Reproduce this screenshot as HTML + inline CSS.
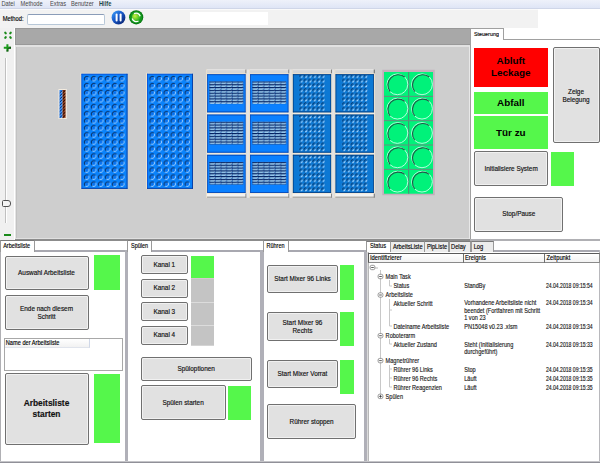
<!DOCTYPE html><html><head><meta charset="utf-8"><style>*{margin:0;padding:0;box-sizing:content-box}
html,body{width:600px;height:465px;overflow:hidden;background:#fff;position:relative;font-family:"Liberation Sans",sans-serif}
.g{position:absolute}
.t{position:absolute;white-space:nowrap;line-height:1.2;-webkit-text-stroke:0.12px currentColor;font-family:"Liberation Sans",sans-serif}
.b{position:absolute;background:#e1e1e1;border:1px solid #707070;border-radius:2px;box-shadow:inset 0 0 0 0.8px #f6f6f6;display:flex;align-items:center;justify-content:center;text-align:center;color:#111;line-height:1.25;-webkit-text-stroke:0.15px #111;font-family:"Liberation Sans",sans-serif}
.s{display:inline-block;transform:scaleY(1.16);transform-origin:50% 60%}
.cb{position:absolute;display:flex;align-items:center;justify-content:center;text-align:center;font-weight:bold;color:#000;font-family:"Liberation Sans",sans-serif}
</style></head><body>
<div class="g" style="left:0;top:0;width:600px;height:9px;background:linear-gradient(#eef1fa,#dde4f5);"></div><div class="g" style="left:0;top:7.6px;width:600px;height:1.2px;background:#cfd6e8;"></div><div class="t" style="left:1.5px;top:1px;font-size:5.7px;color:#484848;font-weight:normal;-webkit-text-stroke:0"><span class="s">Datei</span></div>
<div class="t" style="left:20.5px;top:1px;font-size:5.7px;color:#484848;font-weight:normal;-webkit-text-stroke:0"><span class="s">Methode</span></div>
<div class="t" style="left:50px;top:1px;font-size:5.7px;color:#484848;font-weight:normal;-webkit-text-stroke:0"><span class="s">Extras</span></div>
<div class="t" style="left:71px;top:1px;font-size:5.7px;color:#484848;font-weight:normal;-webkit-text-stroke:0"><span class="s">Benutzer</span></div>
<div class="t" style="left:99px;top:1px;font-size:5.7px;color:#1e4a48;font-weight:bold;-webkit-text-stroke:0"><span class="s">Hilfe</span></div>
<div class="g" style="left:0px;top:9px;width:538px;height:19px;background:#f2f2f2;"></div>
<div class="g" style="left:538px;top:9px;width:62px;height:19px;background:#ffffff;"></div>
<div class="g" style="left:0px;top:8.8px;width:538px;height:1.0px;background:#fafafa;"></div>
<div class="t" style="left:2.7px;top:15.8px;font-size:5.8px;color:#000;font-weight:normal;"><span class="s">Method:</span></div>
<div class="g" style="left:26.5px;top:14px;width:76px;height:9.4px;background:#fff;border:1px solid #b8c8d8;border-top-color:#8a9cb8;border-radius:2px;"></div><svg class="g" style="left:108px;top:8px" width="40" height="20" viewBox="0 0 40 20">
<defs><linearGradient id="pb" x1="0" y1="0" x2="1" y2="1"><stop offset="0" stop-color="#40a8ff"/><stop offset="0.45" stop-color="#1858c8"/><stop offset="1" stop-color="#081a60"/></linearGradient>
<radialGradient id="gc" cx="35%" cy="35%" r="70%"><stop offset="0" stop-color="#c8f040"/><stop offset="1" stop-color="#20b020"/></radialGradient></defs>
<circle cx="10.5" cy="9.5" r="6.9" fill="url(#pb)"/>
<rect x="7.6" y="5.4" width="2" height="8.2" rx="1" fill="#fff"/><rect x="11.6" y="5.4" width="2" height="8.2" rx="1" fill="#fff"/>
<circle cx="28.2" cy="9.3" r="7.1" fill="#0a7a14"/><circle cx="28.2" cy="9.3" r="6" fill="#159a20"/>
<circle cx="28.2" cy="9.3" r="4.2" fill="url(#gc)"/>
<path d="M24.2 10.5 A4.3 4.3 0 0 0 30.5 13" fill="none" stroke="#fff" stroke-width="1.3"/>
<path d="M32.2 8.2 A4.3 4.3 0 0 0 26 5.6" fill="none" stroke="#fff" stroke-width="1.3"/>
</svg><div class="g" style="left:190px;top:12px;width:78px;height:12.5px;background:#ffffff;"></div>
<div class="g" style="left:0px;top:28px;width:15px;height:212px;background:#f0f0f0;"></div>
<div class="g" style="left:13.5px;top:28px;width:1.0px;height:212px;background:#ffffff;"></div>
<svg class="g" style="left:1.3px;top:30px" width="12" height="24" viewBox="0 0 12 24">
<g fill="#1a8a1a"><ellipse cx="4.5" cy="3" rx="1.5" ry="1.1" transform="rotate(45 4.5 3)"/><ellipse cx="9.5" cy="3" rx="1.5" ry="1.1" transform="rotate(-45 9.5 3)"/>
<ellipse cx="4.5" cy="7.5" rx="1.5" ry="1.1" transform="rotate(-45 4.5 7.5)"/><ellipse cx="9.5" cy="7.5" rx="1.5" ry="1.1" transform="rotate(45 9.5 7.5)"/></g>
<path d="M5.4 14.2 h2 v2.6 h2.6 v2 h-2.6 v2.6 h-2 v-2.6 h-2.6 v-2 h2.6z" fill="#1a9a1a"/><path d="M7.4 16.8 h2.6 v2 h-2.6 v2.6 h-2 v-0.8 h1.2 v-2.6 h2.6z" fill="#0a300a" opacity="0.7"/></svg><div class="g" style="left:5px;top:58px;width:0.7999999999999998px;height:165px;background:#c0c0c0;"></div>
<div class="g" style="left:5.8px;top:58px;width:0.6000000000000005px;height:165px;background:#ffffff;"></div>
<div class="g" style="left:1.5px;top:200px;width:7.5px;height:4.5px;border:0.8px solid #505050;border-radius:1.5px 3px 3px 1.5px;background:#f4f4f4"></div><div class="g" style="left:4px;top:233.5px;width:7px;height:2.0px;background:#1a8a1a;"></div>
<div class="g" style="left:15px;top:28px;width:455px;height:16px;background:#a8a8a8;"></div>
<div class="g" style="left:15px;top:28px;width:455px;height:1px;background:#989898;"></div>
<div class="g" style="left:15px;top:46px;width:455px;height:194px;background:#cecece;"></div>
<div class="g" style="left:15px;top:44px;width:455px;height:1.2000000000000028px;background:#999999;"></div>
<div class="g" style="left:15px;top:45.2px;width:455px;height:1.7999999999999972px;background:#e2e2e2;"></div>
<div class="g" style="left:15px;top:28px;width:1px;height:17px;background:#9a9a9a;"></div>
<div class="g" style="left:15px;top:47px;width:1px;height:193px;background:#e4e4e4;"></div>
<div class="g" style="left:16px;top:47px;width:1px;height:193px;background:#c2c2c2;"></div>
<div class="g" style="left:15px;top:237.8px;width:455px;height:1.299999999999983px;background:#e0e0e0;"></div>
<div class="g" style="left:15px;top:239.1px;width:455px;height:1.700000000000017px;background:#8c8c8c;"></div>
<div class="g" style="left:469.2px;top:46px;width:0.8000000000000114px;height:193px;background:#e8e8e8;"></div>
<svg class="g" style="left:0;top:0" width="600" height="465" viewBox="0 0 600 465">
<defs><pattern id="w96_0" x="83.25" y="75.25" width="7.03" height="7.03" patternUnits="userSpaceOnUse">
<path d="M5.1 1.9 A2.25 2.25 0 0 1 1.9 5.1" fill="none" stroke="#a8ccf8" stroke-width="0.85"/>
<path d="M1.9 5.1 A2.25 2.25 0 0 1 5.1 1.9" fill="none" stroke="#0a2c60" stroke-width="0.95"/>
<circle cx="3.5" cy="3.5" r="1.0" fill="#0a6cf0"/></pattern><pattern id="w96_1" x="148.75" y="75.25" width="7.03" height="7.03" patternUnits="userSpaceOnUse">
<path d="M5.1 1.9 A2.25 2.25 0 0 1 1.9 5.1" fill="none" stroke="#a8ccf8" stroke-width="0.85"/>
<path d="M1.9 5.1 A2.25 2.25 0 0 1 5.1 1.9" fill="none" stroke="#0a2c60" stroke-width="0.95"/>
<circle cx="3.5" cy="3.5" r="1.0" fill="#0a6cf0"/></pattern><pattern id="p0_0" x="209.39999999999998" y="81.39999999999999" width="5.65" height="2.83" patternUnits="userSpaceOnUse"><rect x="0" y="0.1" width="5.65" height="1.2" fill="#001a58"/><rect x="0.5" y="1.35" width="4.6" height="1.25" fill="#c0ecff"/><rect x="4.6" y="0.8" width="1" height="0.9" fill="#f0f8ff" opacity="0.6"/></pattern><pattern id="p0_1" x="209.39999999999998" y="121.69999999999999" width="5.65" height="2.83" patternUnits="userSpaceOnUse"><rect x="0" y="0.1" width="5.65" height="1.2" fill="#001a58"/><rect x="0.5" y="1.35" width="4.6" height="1.25" fill="#c0ecff"/><rect x="4.6" y="0.8" width="1" height="0.9" fill="#f0f8ff" opacity="0.6"/></pattern><pattern id="p0_2" x="209.39999999999998" y="161.9" width="5.65" height="2.83" patternUnits="userSpaceOnUse"><rect x="0" y="0.1" width="5.65" height="1.2" fill="#001a58"/><rect x="0.5" y="1.35" width="4.6" height="1.25" fill="#c0ecff"/><rect x="4.6" y="0.8" width="1" height="0.9" fill="#f0f8ff" opacity="0.6"/></pattern><pattern id="p1_0" x="252.29999999999998" y="81.39999999999999" width="5.65" height="2.83" patternUnits="userSpaceOnUse"><rect x="0" y="0.1" width="5.65" height="1.2" fill="#001a58"/><rect x="0.5" y="1.35" width="4.6" height="1.25" fill="#c0ecff"/><rect x="4.6" y="0.8" width="1" height="0.9" fill="#f0f8ff" opacity="0.6"/></pattern><pattern id="p1_1" x="252.29999999999998" y="121.69999999999999" width="5.65" height="2.83" patternUnits="userSpaceOnUse"><rect x="0" y="0.1" width="5.65" height="1.2" fill="#001a58"/><rect x="0.5" y="1.35" width="4.6" height="1.25" fill="#c0ecff"/><rect x="4.6" y="0.8" width="1" height="0.9" fill="#f0f8ff" opacity="0.6"/></pattern><pattern id="p1_2" x="252.29999999999998" y="161.9" width="5.65" height="2.83" patternUnits="userSpaceOnUse"><rect x="0" y="0.1" width="5.65" height="1.2" fill="#001a58"/><rect x="0.5" y="1.35" width="4.6" height="1.25" fill="#c0ecff"/><rect x="4.6" y="0.8" width="1" height="0.9" fill="#f0f8ff" opacity="0.6"/></pattern><pattern id="p2_0" x="298.92" y="73.85" width="4.36" height="4.7" patternUnits="userSpaceOnUse"><path d="M1.2 3.1 A1.3 1.3 0 0 1 3.1 1.2" fill="none" stroke="#061e44" stroke-width="0.85"/><path d="M3.4 1.7 A1.3 1.3 0 0 1 1.7 3.4" fill="none" stroke="#b4dcff" stroke-width="0.95"/></pattern><pattern id="p2_1" x="298.92" y="114.14999999999999" width="4.36" height="4.7" patternUnits="userSpaceOnUse"><path d="M1.2 3.1 A1.3 1.3 0 0 1 3.1 1.2" fill="none" stroke="#061e44" stroke-width="0.85"/><path d="M3.4 1.7 A1.3 1.3 0 0 1 1.7 3.4" fill="none" stroke="#b4dcff" stroke-width="0.95"/></pattern><pattern id="p2_2" x="298.92" y="154.35" width="4.36" height="4.7" patternUnits="userSpaceOnUse"><path d="M1.2 3.1 A1.3 1.3 0 0 1 3.1 1.2" fill="none" stroke="#061e44" stroke-width="0.85"/><path d="M3.4 1.7 A1.3 1.3 0 0 1 1.7 3.4" fill="none" stroke="#b4dcff" stroke-width="0.95"/></pattern><pattern id="p3_0" x="341.62" y="73.85" width="4.36" height="4.7" patternUnits="userSpaceOnUse"><path d="M1.2 3.1 A1.3 1.3 0 0 1 3.1 1.2" fill="none" stroke="#061e44" stroke-width="0.85"/><path d="M3.4 1.7 A1.3 1.3 0 0 1 1.7 3.4" fill="none" stroke="#b4dcff" stroke-width="0.95"/></pattern><pattern id="p3_1" x="341.62" y="114.14999999999999" width="4.36" height="4.7" patternUnits="userSpaceOnUse"><path d="M1.2 3.1 A1.3 1.3 0 0 1 3.1 1.2" fill="none" stroke="#061e44" stroke-width="0.85"/><path d="M3.4 1.7 A1.3 1.3 0 0 1 1.7 3.4" fill="none" stroke="#b4dcff" stroke-width="0.95"/></pattern><pattern id="p3_2" x="341.62" y="154.35" width="4.36" height="4.7" patternUnits="userSpaceOnUse"><path d="M1.2 3.1 A1.3 1.3 0 0 1 3.1 1.2" fill="none" stroke="#061e44" stroke-width="0.85"/><path d="M3.4 1.7 A1.3 1.3 0 0 1 1.7 3.4" fill="none" stroke="#b4dcff" stroke-width="0.95"/></pattern></defs>
<rect x="80.5" y="72.8" width="47" height="116" fill="#efe2c8"/>
<rect x="81.5" y="73.8" width="46" height="115" fill="#0a82fa"/>
<rect x="81.5" y="73.8" width="46" height="0.8" fill="#0a50d8"/>
<rect x="81.5" y="73.8" width="0.8" height="115" fill="#0a50d8"/>
<rect x="81.5" y="187.9" width="46" height="0.9" fill="#0a3ca0"/><rect x="126.6" y="73.8" width="0.9" height="115" fill="#0a3ca0"/>
<rect x="83.25" y="75.25" width="42.18" height="112.48" fill="url(#w96_0)"/>
<rect x="146" y="72.8" width="47" height="116" fill="#efe2c8"/>
<rect x="147" y="73.8" width="46" height="115" fill="#0a82fa"/>
<rect x="147" y="73.8" width="46" height="0.8" fill="#0a50d8"/>
<rect x="147" y="73.8" width="0.8" height="115" fill="#0a50d8"/>
<rect x="147" y="187.9" width="46" height="0.9" fill="#0a3ca0"/><rect x="192.1" y="73.8" width="0.9" height="115" fill="#0a3ca0"/>
<rect x="148.75" y="75.25" width="42.18" height="112.48" fill="url(#w96_1)"/>
<rect x="58.5" y="89" width="8.3" height="30" fill="#f4ece0"/>
<rect x="59.5" y="90" width="3" height="28" fill="#2a80f0"/><rect x="62.5" y="90" width="3" height="28" fill="#7a2a10"/>
<path d="M59.8 92.8 L62.3 90.60000000000001" stroke="#0a2a60" stroke-width="0.9"/><path d="M60.6 93.4 L62.4 91.8" stroke="#a0d0ff" stroke-width="0.5"/>
<path d="M62.8 92.8 L65.3 90.60000000000001" stroke="#200800" stroke-width="0.9"/><path d="M63.6 93.4 L65.4 91.8" stroke="#d08050" stroke-width="0.5"/>
<path d="M59.8 95.89999999999999 L62.3 93.7" stroke="#0a2a60" stroke-width="0.9"/><path d="M60.6 96.5 L62.4 94.89999999999999" stroke="#a0d0ff" stroke-width="0.5"/>
<path d="M62.8 95.89999999999999 L65.3 93.7" stroke="#200800" stroke-width="0.9"/><path d="M63.6 96.5 L65.4 94.89999999999999" stroke="#d08050" stroke-width="0.5"/>
<path d="M59.8 99.0 L62.3 96.80000000000001" stroke="#0a2a60" stroke-width="0.9"/><path d="M60.6 99.60000000000001 L62.4 98.0" stroke="#a0d0ff" stroke-width="0.5"/>
<path d="M62.8 99.0 L65.3 96.80000000000001" stroke="#200800" stroke-width="0.9"/><path d="M63.6 99.60000000000001 L65.4 98.0" stroke="#d08050" stroke-width="0.5"/>
<path d="M59.8 102.1 L62.3 99.9" stroke="#0a2a60" stroke-width="0.9"/><path d="M60.6 102.7 L62.4 101.1" stroke="#a0d0ff" stroke-width="0.5"/>
<path d="M62.8 102.1 L65.3 99.9" stroke="#200800" stroke-width="0.9"/><path d="M63.6 102.7 L65.4 101.1" stroke="#d08050" stroke-width="0.5"/>
<path d="M59.8 105.2 L62.3 103.00000000000001" stroke="#0a2a60" stroke-width="0.9"/><path d="M60.6 105.80000000000001 L62.4 104.2" stroke="#a0d0ff" stroke-width="0.5"/>
<path d="M62.8 105.2 L65.3 103.00000000000001" stroke="#200800" stroke-width="0.9"/><path d="M63.6 105.80000000000001 L65.4 104.2" stroke="#d08050" stroke-width="0.5"/>
<path d="M59.8 108.3 L62.3 106.10000000000001" stroke="#0a2a60" stroke-width="0.9"/><path d="M60.6 108.9 L62.4 107.3" stroke="#a0d0ff" stroke-width="0.5"/>
<path d="M62.8 108.3 L65.3 106.10000000000001" stroke="#200800" stroke-width="0.9"/><path d="M63.6 108.9 L65.4 107.3" stroke="#d08050" stroke-width="0.5"/>
<path d="M59.8 111.4 L62.3 109.20000000000002" stroke="#0a2a60" stroke-width="0.9"/><path d="M60.6 112.00000000000001 L62.4 110.4" stroke="#a0d0ff" stroke-width="0.5"/>
<path d="M62.8 111.4 L65.3 109.20000000000002" stroke="#200800" stroke-width="0.9"/><path d="M63.6 112.00000000000001 L65.4 110.4" stroke="#d08050" stroke-width="0.5"/>
<path d="M59.8 114.5 L62.3 112.30000000000001" stroke="#0a2a60" stroke-width="0.9"/><path d="M60.6 115.10000000000001 L62.4 113.5" stroke="#a0d0ff" stroke-width="0.5"/>
<path d="M62.8 114.5 L65.3 112.30000000000001" stroke="#200800" stroke-width="0.9"/><path d="M63.6 115.10000000000001 L65.4 113.5" stroke="#d08050" stroke-width="0.5"/>
<path d="M59.8 117.6 L62.3 115.4" stroke="#0a2a60" stroke-width="0.9"/><path d="M60.6 118.2 L62.4 116.6" stroke="#a0d0ff" stroke-width="0.5"/>
<path d="M62.8 117.6 L65.3 115.4" stroke="#200800" stroke-width="0.9"/><path d="M63.6 118.2 L65.4 116.6" stroke="#d08050" stroke-width="0.5"/>
<rect x="206.2" y="69.3" width="40.3" height="128.5" fill="#efe3cc"/>
<rect x="207.0" y="69.3" width="39.5" height="4" fill="#d6d6d6"/>
<rect x="207.0" y="69.3" width="39.5" height="0.9" fill="#e6e6e6"/>
<rect x="245.39999999999998" y="69.5" width="1.3" height="3.8" fill="#808080"/>
<rect x="207.0" y="193.6" width="39.5" height="3.2" fill="#f2f2f2"/>
<rect x="207.0" y="196.6" width="39.5" height="1.2" fill="#a4a4a4"/>
<rect x="245.39999999999998" y="193.6" width="1.3" height="4" fill="#8a8a8a"/>
<rect x="246.5" y="69.3" width="2.5" height="128.5" fill="#e4e4e4"/>
<rect x="207.29999999999998" y="74.3" width="38.2" height="38" fill="#0a80ff"/>
<rect x="207.29999999999998" y="74.3" width="38.2" height="0.8" fill="#0040b0"/><rect x="207.29999999999998" y="74.3" width="0.7" height="38" fill="#0040b0"/>
<rect x="207.29999999999998" y="111.5" width="38.2" height="0.8" fill="#0040b0"/><rect x="244.79999999999998" y="74.3" width="0.7" height="38" fill="#0040b0"/>
<rect x="209.39999999999998" y="81.39999999999999" width="33.900000000000006" height="22.64" fill="#1a5ab0"/>
<rect x="209.39999999999998" y="81.39999999999999" width="33.900000000000006" height="22.64" fill="url(#p0_0)"/>
<rect x="207.0" y="113.39999999999999" width="39.5" height="0.8" fill="#f0f0f0"/>
<rect x="207.29999999999998" y="114.6" width="38.2" height="38" fill="#0a80ff"/>
<rect x="207.29999999999998" y="114.6" width="38.2" height="0.8" fill="#0040b0"/><rect x="207.29999999999998" y="114.6" width="0.7" height="38" fill="#0040b0"/>
<rect x="207.29999999999998" y="151.8" width="38.2" height="0.8" fill="#0040b0"/><rect x="244.79999999999998" y="114.6" width="0.7" height="38" fill="#0040b0"/>
<rect x="209.39999999999998" y="121.69999999999999" width="33.900000000000006" height="22.64" fill="#1a5ab0"/>
<rect x="209.39999999999998" y="121.69999999999999" width="33.900000000000006" height="22.64" fill="url(#p0_1)"/>
<rect x="207.0" y="153.60000000000002" width="39.5" height="0.8" fill="#f0f0f0"/>
<rect x="207.29999999999998" y="154.8" width="38.2" height="38" fill="#0a80ff"/>
<rect x="207.29999999999998" y="154.8" width="38.2" height="0.8" fill="#0040b0"/><rect x="207.29999999999998" y="154.8" width="0.7" height="38" fill="#0040b0"/>
<rect x="207.29999999999998" y="192.0" width="38.2" height="0.8" fill="#0040b0"/><rect x="244.79999999999998" y="154.8" width="0.7" height="38" fill="#0040b0"/>
<rect x="209.39999999999998" y="161.9" width="33.900000000000006" height="22.64" fill="#1a5ab0"/>
<rect x="209.39999999999998" y="161.9" width="33.900000000000006" height="22.64" fill="url(#p0_2)"/>
<rect x="249.1" y="69.3" width="40.3" height="128.5" fill="#efe3cc"/>
<rect x="249.9" y="69.3" width="39.5" height="4" fill="#d6d6d6"/>
<rect x="249.9" y="69.3" width="39.5" height="0.9" fill="#e6e6e6"/>
<rect x="288.3" y="69.5" width="1.3" height="3.8" fill="#808080"/>
<rect x="249.9" y="193.6" width="39.5" height="3.2" fill="#f2f2f2"/>
<rect x="249.9" y="196.6" width="39.5" height="1.2" fill="#a4a4a4"/>
<rect x="288.3" y="193.6" width="1.3" height="4" fill="#8a8a8a"/>
<rect x="289.4" y="69.3" width="2.5" height="128.5" fill="#e4e4e4"/>
<rect x="250.2" y="74.3" width="38.2" height="38" fill="#0a80ff"/>
<rect x="250.2" y="74.3" width="38.2" height="0.8" fill="#0040b0"/><rect x="250.2" y="74.3" width="0.7" height="38" fill="#0040b0"/>
<rect x="250.2" y="111.5" width="38.2" height="0.8" fill="#0040b0"/><rect x="287.7" y="74.3" width="0.7" height="38" fill="#0040b0"/>
<rect x="252.29999999999998" y="81.39999999999999" width="33.900000000000006" height="22.64" fill="#1a5ab0"/>
<rect x="252.29999999999998" y="81.39999999999999" width="33.900000000000006" height="22.64" fill="url(#p1_0)"/>
<rect x="249.9" y="113.39999999999999" width="39.5" height="0.8" fill="#f0f0f0"/>
<rect x="250.2" y="114.6" width="38.2" height="38" fill="#0a80ff"/>
<rect x="250.2" y="114.6" width="38.2" height="0.8" fill="#0040b0"/><rect x="250.2" y="114.6" width="0.7" height="38" fill="#0040b0"/>
<rect x="250.2" y="151.8" width="38.2" height="0.8" fill="#0040b0"/><rect x="287.7" y="114.6" width="0.7" height="38" fill="#0040b0"/>
<rect x="252.29999999999998" y="121.69999999999999" width="33.900000000000006" height="22.64" fill="#1a5ab0"/>
<rect x="252.29999999999998" y="121.69999999999999" width="33.900000000000006" height="22.64" fill="url(#p1_1)"/>
<rect x="249.9" y="153.60000000000002" width="39.5" height="0.8" fill="#f0f0f0"/>
<rect x="250.2" y="154.8" width="38.2" height="38" fill="#0a80ff"/>
<rect x="250.2" y="154.8" width="38.2" height="0.8" fill="#0040b0"/><rect x="250.2" y="154.8" width="0.7" height="38" fill="#0040b0"/>
<rect x="250.2" y="192.0" width="38.2" height="0.8" fill="#0040b0"/><rect x="287.7" y="154.8" width="0.7" height="38" fill="#0040b0"/>
<rect x="252.29999999999998" y="161.9" width="33.900000000000006" height="22.64" fill="#1a5ab0"/>
<rect x="252.29999999999998" y="161.9" width="33.900000000000006" height="22.64" fill="url(#p1_2)"/>
<rect x="291.8" y="69.3" width="40.3" height="128.5" fill="#efe3cc"/>
<rect x="292.6" y="69.3" width="39.5" height="4" fill="#d6d6d6"/>
<rect x="292.6" y="69.3" width="39.5" height="0.9" fill="#e6e6e6"/>
<rect x="331.0" y="69.5" width="1.3" height="3.8" fill="#808080"/>
<rect x="292.6" y="193.6" width="39.5" height="3.2" fill="#f2f2f2"/>
<rect x="292.6" y="196.6" width="39.5" height="1.2" fill="#a4a4a4"/>
<rect x="331.0" y="193.6" width="1.3" height="4" fill="#8a8a8a"/>
<rect x="332.1" y="69.3" width="2.5" height="128.5" fill="#e4e4e4"/>
<rect x="292.90000000000003" y="74.3" width="38.2" height="38" fill="#0c78d4"/>
<rect x="292.90000000000003" y="74.3" width="38.2" height="0.8" fill="#003a80"/><rect x="292.90000000000003" y="74.3" width="0.7" height="38" fill="#003a80"/>
<rect x="292.90000000000003" y="111.5" width="38.2" height="0.8" fill="#003a80"/><rect x="330.40000000000003" y="74.3" width="0.7" height="38" fill="#003a80"/>
<rect x="298.92" y="75.1" width="26.160000000000004" height="36.35" fill="url(#p2_0)"/>
<rect x="292.6" y="113.39999999999999" width="39.5" height="0.8" fill="#f0f0f0"/>
<rect x="292.90000000000003" y="114.6" width="38.2" height="38" fill="#0c78d4"/>
<rect x="292.90000000000003" y="114.6" width="38.2" height="0.8" fill="#003a80"/><rect x="292.90000000000003" y="114.6" width="0.7" height="38" fill="#003a80"/>
<rect x="292.90000000000003" y="151.8" width="38.2" height="0.8" fill="#003a80"/><rect x="330.40000000000003" y="114.6" width="0.7" height="38" fill="#003a80"/>
<rect x="298.92" y="115.39999999999999" width="26.160000000000004" height="36.35" fill="url(#p2_1)"/>
<rect x="292.6" y="153.60000000000002" width="39.5" height="0.8" fill="#f0f0f0"/>
<rect x="292.90000000000003" y="154.8" width="38.2" height="38" fill="#0c78d4"/>
<rect x="292.90000000000003" y="154.8" width="38.2" height="0.8" fill="#003a80"/><rect x="292.90000000000003" y="154.8" width="0.7" height="38" fill="#003a80"/>
<rect x="292.90000000000003" y="192.0" width="38.2" height="0.8" fill="#003a80"/><rect x="330.40000000000003" y="154.8" width="0.7" height="38" fill="#003a80"/>
<rect x="298.92" y="155.60000000000002" width="26.160000000000004" height="36.34999999999997" fill="url(#p2_2)"/>
<rect x="334.5" y="69.3" width="40.3" height="128.5" fill="#efe3cc"/>
<rect x="335.3" y="69.3" width="39.5" height="4" fill="#d6d6d6"/>
<rect x="335.3" y="69.3" width="39.5" height="0.9" fill="#e6e6e6"/>
<rect x="373.7" y="69.5" width="1.3" height="3.8" fill="#808080"/>
<rect x="335.3" y="193.6" width="39.5" height="3.2" fill="#f2f2f2"/>
<rect x="335.3" y="196.6" width="39.5" height="1.2" fill="#a4a4a4"/>
<rect x="373.7" y="193.6" width="1.3" height="4" fill="#8a8a8a"/>
<rect x="335.6" y="74.3" width="38.2" height="38" fill="#0c78d4"/>
<rect x="335.6" y="74.3" width="38.2" height="0.8" fill="#003a80"/><rect x="335.6" y="74.3" width="0.7" height="38" fill="#003a80"/>
<rect x="335.6" y="111.5" width="38.2" height="0.8" fill="#003a80"/><rect x="373.1" y="74.3" width="0.7" height="38" fill="#003a80"/>
<rect x="341.62" y="75.1" width="26.160000000000004" height="36.35" fill="url(#p3_0)"/>
<rect x="335.3" y="113.39999999999999" width="39.5" height="0.8" fill="#f0f0f0"/>
<rect x="335.6" y="114.6" width="38.2" height="38" fill="#0c78d4"/>
<rect x="335.6" y="114.6" width="38.2" height="0.8" fill="#003a80"/><rect x="335.6" y="114.6" width="0.7" height="38" fill="#003a80"/>
<rect x="335.6" y="151.8" width="38.2" height="0.8" fill="#003a80"/><rect x="373.1" y="114.6" width="0.7" height="38" fill="#003a80"/>
<rect x="341.62" y="115.39999999999999" width="26.160000000000004" height="36.35" fill="url(#p3_1)"/>
<rect x="335.3" y="153.60000000000002" width="39.5" height="0.8" fill="#f0f0f0"/>
<rect x="335.6" y="154.8" width="38.2" height="38" fill="#0c78d4"/>
<rect x="335.6" y="154.8" width="38.2" height="0.8" fill="#003a80"/><rect x="335.6" y="154.8" width="0.7" height="38" fill="#003a80"/>
<rect x="335.6" y="192.0" width="38.2" height="0.8" fill="#003a80"/><rect x="373.1" y="154.8" width="0.7" height="38" fill="#003a80"/>
<rect x="341.62" y="155.60000000000002" width="26.160000000000004" height="36.34999999999997" fill="url(#p3_2)"/>
<rect x="382.3" y="69.8" width="52.5" height="125.4" fill="#c4b0bc"/>
<rect x="384" y="72" width="49" height="121.7" fill="#00f27a"/>
<line x1="408.7" y1="72" x2="408.7" y2="193.7" stroke="#5a7a70" stroke-width="0.9"/>
<line x1="384" y1="96.34" x2="433" y2="96.34" stroke="#6a8a80" stroke-width="1"/>
<line x1="384" y1="120.68" x2="433" y2="120.68" stroke="#6a8a80" stroke-width="1"/>
<line x1="384" y1="145.01999999999998" x2="433" y2="145.01999999999998" stroke="#6a8a80" stroke-width="1"/>
<line x1="384" y1="169.36" x2="433" y2="169.36" stroke="#6a8a80" stroke-width="1"/>
<circle cx="397.4" cy="84.3" r="10.4" fill="none" stroke="#c8ffe8" stroke-width="0.9"/>
<path d="M390.09999999999997 91.6 A10.4 10.4 0 0 1 404.7 77.0" fill="none" stroke="#1e5a46" stroke-width="1.1"/>
<circle cx="422.0" cy="84.3" r="10.4" fill="none" stroke="#c8ffe8" stroke-width="0.9"/>
<path d="M414.7 91.6 A10.4 10.4 0 0 1 429.3 77.0" fill="none" stroke="#1e5a46" stroke-width="1.1"/>
<circle cx="397.4" cy="108.64" r="10.4" fill="none" stroke="#c8ffe8" stroke-width="0.9"/>
<path d="M390.09999999999997 115.94 A10.4 10.4 0 0 1 404.7 101.34" fill="none" stroke="#1e5a46" stroke-width="1.1"/>
<circle cx="422.0" cy="108.64" r="10.4" fill="none" stroke="#c8ffe8" stroke-width="0.9"/>
<path d="M414.7 115.94 A10.4 10.4 0 0 1 429.3 101.34" fill="none" stroke="#1e5a46" stroke-width="1.1"/>
<circle cx="397.4" cy="132.98" r="10.4" fill="none" stroke="#c8ffe8" stroke-width="0.9"/>
<path d="M390.09999999999997 140.28 A10.4 10.4 0 0 1 404.7 125.67999999999999" fill="none" stroke="#1e5a46" stroke-width="1.1"/>
<circle cx="422.0" cy="132.98" r="10.4" fill="none" stroke="#c8ffe8" stroke-width="0.9"/>
<path d="M414.7 140.28 A10.4 10.4 0 0 1 429.3 125.67999999999999" fill="none" stroke="#1e5a46" stroke-width="1.1"/>
<circle cx="397.4" cy="157.32" r="10.4" fill="none" stroke="#c8ffe8" stroke-width="0.9"/>
<path d="M390.09999999999997 164.62 A10.4 10.4 0 0 1 404.7 150.01999999999998" fill="none" stroke="#1e5a46" stroke-width="1.1"/>
<circle cx="422.0" cy="157.32" r="10.4" fill="none" stroke="#c8ffe8" stroke-width="0.9"/>
<path d="M414.7 164.62 A10.4 10.4 0 0 1 429.3 150.01999999999998" fill="none" stroke="#1e5a46" stroke-width="1.1"/>
<circle cx="397.4" cy="181.66" r="10.4" fill="none" stroke="#c8ffe8" stroke-width="0.9"/>
<path d="M390.09999999999997 188.96 A10.4 10.4 0 0 1 404.7 174.35999999999999" fill="none" stroke="#1e5a46" stroke-width="1.1"/>
<circle cx="422.0" cy="181.66" r="10.4" fill="none" stroke="#c8ffe8" stroke-width="0.9"/>
<path d="M414.7 188.96 A10.4 10.4 0 0 1 429.3 174.35999999999999" fill="none" stroke="#1e5a46" stroke-width="1.1"/>
</svg><div class="g" style="left:470px;top:28px;width:130px;height:212px;background:#ffffff;"></div>
<div class="g" style="left:470px;top:38.5px;width:130px;height:1px;background:#a0a0a0"></div><div class="g" style="left:470px;top:38.5px;width:1px;height:201px;background:#a0a0a0"></div><div class="g" style="left:470px;top:238.8px;width:130px;height:2px;background:#b0b0b4"></div><div class="g" style="left:470px;top:28px;width:32px;height:11px;background:#fff;border:1px solid #a0a0a0;border-bottom:none;"></div><div class="t" style="left:474px;top:30.5px;font-size:5.4px;color:#000;"><span class="s">Steuerung</span></div>
<div class="g" style="left:473.8px;top:47.6px;width:73.99999999999994px;height:38.99999999999999px;background:#ff0000;"></div>
<div class="cb" style="left:473.8px;top:47.6px;width:74px;height:39px;font-size:9.9px;line-height:12px">Abluft<br>Leckage</div><div class="g" style="left:473.8px;top:91.7px;width:73.99999999999994px;height:22.299999999999997px;background:#55f74b;"></div>
<div class="cb" style="left:473.8px;top:91.7px;width:74px;height:22.3px;font-size:9.9px;">Abfall</div><div class="g" style="left:473.8px;top:115.6px;width:73.99999999999994px;height:33.0px;background:#55f74b;"></div>
<div class="cb" style="left:473.8px;top:115.6px;width:74px;height:33px;font-size:9.9px;">Tür zu</div><div class="b" style="left:552.5px;top:46.5px;width:45.0px;height:94.5px;font-size:6.4px;font-weight:normal;line-height:1.12"><span class="s">Zeige<br>Belegung</span></div>
<div class="b" style="left:474.2px;top:151.4px;width:71.80000000000001px;height:32.599999999999994px;font-size:6.4px;font-weight:normal;"><span class="s">Initialisiere System</span></div>
<div class="g" style="left:551.1px;top:152px;width:22.899999999999977px;height:34px;background:#55f74b;"></div>
<div class="b" style="left:474.2px;top:196.7px;width:87.19999999999999px;height:32.900000000000006px;font-size:6.4px;font-weight:normal;"><span class="s">Stop/Pause</span></div>
<div class="g" style="left:0px;top:240px;width:600px;height:-15px;background:#ffffff;"></div>
<div class="g" style="left:0px;top:249.9px;width:125px;height:1.799999999999983px;background:#a8a8b0;"></div>
<div class="g" style="left:0px;top:249.9px;width:1.3px;height:212.1px;background:#b0b0b4;"></div>
<div class="g" style="left:124.8px;top:249.9px;width:3.200000000000003px;height:212.1px;background:#b0b0b8;"></div>
<div class="g" style="left:0px;top:240px;width:33px;height:10.699999999999989px;background:#fff;border:1px solid #9a9a9a;border-top-color:#7a7a7a;border-bottom:none;"></div><div class="t" style="left:3.2px;top:242.8px;font-size:5.5px;color:#000;"><span class="s">Arbeitsliste</span></div>
<div class="b" style="left:4.5px;top:255.5px;width:82.0px;height:32.80000000000001px;font-size:6.4px;font-weight:normal;"><span class="s">Auswahl Arbeitsliste</span></div>
<div class="g" style="left:93.6px;top:255.1px;width:26.400000000000006px;height:35.29999999999998px;background:#55f74b;"></div>
<div class="b" style="left:4.5px;top:294.5px;width:82.0px;height:33.89999999999998px;font-size:6.4px;font-weight:normal;line-height:1.12"><span class="s">Ende nach diesem<br>Schritt</span></div>
<div class="g" style="left:4px;top:338px;width:117px;height:31px;border:1px solid #a8a8a8;background:#fff"></div><div class="g" style="left:5px;top:339px;width:84px;height:8px;background:linear-gradient(#fff,#f2f2f2);border-right:1px solid #d0d8e8;border-bottom:1px solid #e0e4ec"></div><div class="t" style="left:5.8px;top:340px;font-size:5.65px;color:#000;"><span class="s">Name der Arbeitsliste</span></div>
<div class="b" style="left:4.5px;top:373px;width:82.0px;height:69.69999999999999px;font-size:8.4px;font-weight:bold;line-height:1.05"><span class="s">Arbeitsliste<br>starten</span></div>
<div class="g" style="left:93.6px;top:374px;width:26.400000000000006px;height:68.80000000000001px;background:#55f74b;"></div>
<div class="g" style="left:127px;top:249.9px;width:134.5px;height:1.799999999999983px;background:#a8a8b0;"></div>
<div class="g" style="left:260.4px;top:249.9px;width:3.6000000000000227px;height:212.1px;background:#b0b0b8;"></div>
<div class="g" style="left:127px;top:240px;width:23px;height:10.699999999999989px;background:#fff;border:1px solid #9a9a9a;border-top-color:#7a7a7a;border-bottom:none;"></div><div class="t" style="left:131px;top:242.8px;font-size:5.5px;color:#000;"><span class="s">Spülen</span></div>
<div class="b" style="left:140.5px;top:255.2px;width:45.69999999999999px;height:17.0px;font-size:6.4px;font-weight:normal;"><span class="s">Kanal 1</span></div>
<div class="b" style="left:140.5px;top:278.6px;width:45.69999999999999px;height:17.0px;font-size:6.4px;font-weight:normal;"><span class="s">Kanal 2</span></div>
<div class="b" style="left:140.5px;top:302.2px;width:45.69999999999999px;height:17.0px;font-size:6.4px;font-weight:normal;"><span class="s">Kanal 3</span></div>
<div class="b" style="left:140.5px;top:325.8px;width:45.69999999999999px;height:17.0px;font-size:6.4px;font-weight:normal;"><span class="s">Kanal 4</span></div>
<div class="g" style="left:191px;top:255.8px;width:23.19999999999999px;height:22.80000000000001px;background:#55f74b;"></div>
<div class="g" style="left:191px;top:278.4px;width:23px;height:0.8000000000000114px;background:#d8c8d0;"></div>
<div class="g" style="left:191px;top:279.2px;width:23px;height:22.80000000000001px;background:#c4c4c4;"></div>
<div class="g" style="left:191px;top:302.8px;width:23px;height:22.5px;background:#c4c4c4;"></div>
<div class="g" style="left:191px;top:326.1px;width:23px;height:18.899999999999977px;background:#c4c4c4;"></div>
<div class="g" style="left:191px;top:302px;width:23px;height:0.8000000000000114px;background:#dcdcdc;"></div>
<div class="g" style="left:191px;top:325.3px;width:23px;height:0.8000000000000114px;background:#dcdcdc;"></div>
<div class="g" style="left:191px;top:345px;width:23px;height:0.8000000000000114px;background:#d4d4d4;"></div>
<div class="b" style="left:140.5px;top:356.6px;width:109.30000000000001px;height:22.099999999999966px;font-size:6.4px;font-weight:normal;"><span class="s">Spüloptionen</span></div>
<div class="b" style="left:140.5px;top:385.2px;width:83.19999999999999px;height:33.19999999999999px;font-size:6.4px;font-weight:normal;"><span class="s">Spülen starten</span></div>
<div class="g" style="left:228px;top:386px;width:22.900000000000006px;height:33.60000000000002px;background:#55f74b;"></div>
<div class="g" style="left:263.5px;top:249.9px;width:101.5px;height:1.799999999999983px;background:#a8a8b0;"></div>
<div class="g" style="left:363.8px;top:249.9px;width:3.1999999999999886px;height:212.1px;background:#b0b0b8;"></div>
<div class="g" style="left:367px;top:251.7px;width:1px;height:210.3px;background:#dcdcdc;"></div>
<div class="g" style="left:368px;top:251.7px;width:1px;height:210.3px;background:#b8b8b8;"></div>
<div class="g" style="left:263px;top:240px;width:24px;height:10.699999999999989px;background:#fff;border:1px solid #9a9a9a;border-top-color:#7a7a7a;border-bottom:none;"></div><div class="t" style="left:266.5px;top:242.8px;font-size:5.5px;color:#000;"><span class="s">Rühren</span></div>
<div class="b" style="left:267.3px;top:265.1px;width:68.5px;height:26.399999999999977px;font-size:6.4px;font-weight:normal;"><span class="s">Start Mixer 96 Links</span></div>
<div class="g" style="left:340px;top:265px;width:14px;height:34.5px;background:#55f74b;"></div>
<div class="b" style="left:267.3px;top:312.4px;width:68.30000000000001px;height:26.400000000000034px;font-size:6.4px;font-weight:normal;line-height:1.12"><span class="s">Start Mixer 96<br>Rechts</span></div>
<div class="g" style="left:340px;top:312.4px;width:13.600000000000023px;height:33.60000000000002px;background:#55f74b;"></div>
<div class="b" style="left:267.3px;top:359.6px;width:68.30000000000001px;height:26.0px;font-size:6.4px;font-weight:normal;"><span class="s">Start Mixer Vorrat</span></div>
<div class="g" style="left:340px;top:359.6px;width:13.600000000000023px;height:34.39999999999998px;background:#55f74b;"></div>
<div class="b" style="left:267.3px;top:403.9px;width:86.69999999999999px;height:33.5px;font-size:6.4px;font-weight:normal;"><span class="s">Rührer stoppen</span></div>
<div class="g" style="left:367px;top:249.9px;width:233px;height:1.799999999999983px;background:#a8a8b0;"></div>
<div class="g" style="left:598.6px;top:249.9px;width:1.3999999999999773px;height:212.1px;background:#b8b8bc;"></div>
<div class="g" style="left:0px;top:460.6px;width:600px;height:1.1999999999999886px;background:#c4c4c8;"></div>
<div class="g" style="left:0px;top:461.8px;width:600px;height:1.1999999999999886px;background:#909098;"></div>
<div class="g" style="left:390.4px;top:241.3px;width:32.5px;height:9.399999999999977px;background:#ececec;border:1px solid #9a9a9a;border-top-color:#7a7a7a;border-bottom:none;"></div><div class="t" style="left:392.9px;top:244.10000000000002px;font-size:5.7px;color:#000;"><span class="s">ArbeitsListe</span></div>
<div class="g" style="left:424.4px;top:241.3px;width:22.700000000000045px;height:9.399999999999977px;background:#ececec;border:1px solid #9a9a9a;border-top-color:#7a7a7a;border-bottom:none;"></div><div class="t" style="left:426.9px;top:244.10000000000002px;font-size:5.7px;color:#000;"><span class="s">PipListe</span></div>
<div class="g" style="left:448.6px;top:241.3px;width:20.599999999999966px;height:9.399999999999977px;background:#ececec;border:1px solid #9a9a9a;border-top-color:#7a7a7a;border-bottom:none;"></div><div class="t" style="left:451.1px;top:244.10000000000002px;font-size:5.7px;color:#000;"><span class="s">Delay</span></div>
<div class="g" style="left:471.2px;top:241.3px;width:20.80000000000001px;height:9.399999999999977px;background:#ececec;border:1px solid #9a9a9a;border-top-color:#7a7a7a;border-bottom:none;"></div><div class="t" style="left:473.7px;top:244.10000000000002px;font-size:5.7px;color:#000;"><span class="s">Log</span></div>
<div class="g" style="left:366px;top:240.5px;width:23px;height:10.199999999999989px;background:#fff;border:1px solid #9a9a9a;border-top-color:#7a7a7a;border-bottom:none;"></div><div class="t" style="left:370px;top:243.3px;font-size:5.7px;color:#000;"><span class="s">Status</span></div>
<div class="g" style="left:368px;top:253px;width:230px;height:7.8px;border:1px solid #5a5a5a;border-bottom-color:#8a8a8a;border-right-color:#8a8a8a;background:linear-gradient(#fff,#f2f2f2)"></div><div class="g" style="left:463px;top:253.5px;width:1px;height:9.0px;background:#707070;"></div>
<div class="g" style="left:544px;top:253.5px;width:1px;height:9.0px;background:#707070;"></div>
<div class="t" style="left:370px;top:254.5px;font-size:5.8px;color:#000;"><span class="s">Identifizierer</span></div>
<div class="t" style="left:465px;top:254.5px;font-size:5.8px;color:#000;"><span class="s">Ereignis</span></div>
<div class="t" style="left:546.5px;top:254.5px;font-size:5.8px;color:#000;"><span class="s">Zeitpunkt</span></div>
<svg class="g" style="left:0;top:0" width="600" height="465" viewBox="0 0 600 465"><g stroke="#c8c8c8" stroke-width="1" fill="none"><line x1="380.5" y1="270" x2="380.5" y2="394"/><line x1="389.5" y1="280" x2="389.5" y2="286"/><line x1="389.5" y1="286" x2="392" y2="286"/><line x1="389.5" y1="299" x2="389.5" y2="326"/><line x1="389.5" y1="326" x2="392" y2="326"/><line x1="389.5" y1="310" x2="392" y2="310"/><line x1="389.5" y1="339" x2="389.5" y2="344"/><line x1="389.5" y1="344" x2="392" y2="344"/><line x1="389.5" y1="365" x2="389.5" y2="387"/><line x1="389.5" y1="369" x2="392" y2="369"/><line x1="389.5" y1="378" x2="392" y2="378"/><line x1="389.5" y1="387" x2="392" y2="387"/></g><g stroke="#8a8a8a" stroke-width="0.9" fill="#fff"><rect x="370.1" y="265.3" width="4.8" height="4.4" rx="1.6"/><line x1="371.2" y1="267.5" x2="373.8" y2="267.5" stroke="#303030" stroke-width="0.8"/><rect x="378.1" y="274.3" width="4.8" height="4.4" rx="1.6"/><line x1="379.2" y1="276.5" x2="381.8" y2="276.5" stroke="#303030" stroke-width="0.8"/><rect x="378.1" y="292.8" width="4.8" height="4.4" rx="1.6"/><line x1="379.2" y1="295" x2="381.8" y2="295" stroke="#303030" stroke-width="0.8"/><rect x="378.1" y="333.5" width="4.8" height="4.4" rx="1.6"/><line x1="379.2" y1="335.7" x2="381.8" y2="335.7" stroke="#303030" stroke-width="0.8"/><rect x="378.1" y="358.40000000000003" width="4.8" height="4.4" rx="1.6"/><line x1="379.2" y1="360.6" x2="381.8" y2="360.6" stroke="#303030" stroke-width="0.8"/><rect x="378.1" y="394.2" width="4.8" height="4.4" rx="1.6"/><line x1="379.2" y1="396.4" x2="381.8" y2="396.4" stroke="#303030" stroke-width="0.8"/><line x1="380.5" y1="395.09999999999997" x2="380.5" y2="397.7" stroke="#303030" stroke-width="0.8"/><line x1="375" y1="268" x2="378" y2="268" stroke="#b0b0b0"/></g></svg><div class="t" style="left:385.6px;top:273.9px;font-size:5.6px;color:#202020;"><span class="s">Main Task</span></div>
<div class="t" style="left:393.4px;top:283.0px;font-size:5.6px;color:#202020;"><span class="s">Status</span></div>
<div class="t" style="left:385.6px;top:292.2px;font-size:5.6px;color:#202020;"><span class="s">Arbeitsliste</span></div>
<div class="t" style="left:393.4px;top:300.7px;font-size:5.6px;color:#202020;"><span class="s">Aktueller Schritt</span></div>
<div class="t" style="left:393.4px;top:323.7px;font-size:5.6px;color:#202020;"><span class="s">Dateiname Arbeitsliste</span></div>
<div class="t" style="left:385.6px;top:332.9px;font-size:5.6px;color:#202020;"><span class="s">Roboterarm</span></div>
<div class="t" style="left:393.4px;top:341.59999999999997px;font-size:5.6px;color:#202020;"><span class="s">Aktueller Zustand</span></div>
<div class="t" style="left:385.6px;top:357.8px;font-size:5.6px;color:#202020;"><span class="s">Magnetrührer</span></div>
<div class="t" style="left:393.4px;top:366.59999999999997px;font-size:5.6px;color:#202020;"><span class="s">Rührer 96 Links</span></div>
<div class="t" style="left:393.4px;top:375.59999999999997px;font-size:5.6px;color:#202020;"><span class="s">Rührer 96 Rechts</span></div>
<div class="t" style="left:393.4px;top:384.5px;font-size:5.6px;color:#202020;"><span class="s">Rührer Reagenzien</span></div>
<div class="t" style="left:385.6px;top:393.59999999999997px;font-size:5.6px;color:#202020;"><span class="s">Spülen</span></div>
<div class="t" style="left:464.2px;top:283.09999999999997px;font-size:5.6px;color:#202020;"><span class="s">StandBy</span></div>
<div class="t" style="left:464.2px;top:299.9px;font-size:5.6px;color:#202020;"><span class="s">Vorhandene Arbeitsliste nicht</span></div>
<div class="t" style="left:464.2px;top:307.5px;font-size:5.6px;color:#202020;"><span class="s">beendet (Fortfahren mit Schritt</span></div>
<div class="t" style="left:464.2px;top:315.0px;font-size:5.6px;color:#202020;"><span class="s">1 von 23</span></div>
<div class="t" style="left:464.2px;top:323.9px;font-size:5.6px;color:#202020;"><span class="s">PN15048 v0.23 .xlsm</span></div>
<div class="t" style="left:464.2px;top:342.2px;font-size:5.6px;color:#202020;"><span class="s">Steht (Initialisierung</span></div>
<div class="t" style="left:464.2px;top:349.4px;font-size:5.6px;color:#202020;"><span class="s">durchgeführt)</span></div>
<div class="t" style="left:464.2px;top:367.2px;font-size:5.6px;color:#202020;"><span class="s">Stop</span></div>
<div class="t" style="left:464.2px;top:375.8px;font-size:5.6px;color:#202020;"><span class="s">Läuft</span></div>
<div class="t" style="left:464.2px;top:384.7px;font-size:5.6px;color:#202020;"><span class="s">Läuft</span></div>
<div class="t" style="left:545.9px;top:283.09999999999997px;font-size:5.1px;color:#202020;"><span class="s" style="transform:scaleY(1.32)">24.04.2018 09:15:54</span></div>
<div class="t" style="left:545.9px;top:299.9px;font-size:5.1px;color:#202020;"><span class="s" style="transform:scaleY(1.32)">24.04.2018 09:15:34</span></div>
<div class="t" style="left:545.9px;top:323.9px;font-size:5.1px;color:#202020;"><span class="s" style="transform:scaleY(1.32)">24.04.2018 09:15:34</span></div>
<div class="t" style="left:545.9px;top:342.2px;font-size:5.1px;color:#202020;"><span class="s" style="transform:scaleY(1.32)">24.04.2018 09:15:33</span></div>
<div class="t" style="left:545.9px;top:367.2px;font-size:5.1px;color:#202020;"><span class="s" style="transform:scaleY(1.32)">24.04.2018 09:15:35</span></div>
<div class="t" style="left:545.9px;top:375.8px;font-size:5.1px;color:#202020;"><span class="s" style="transform:scaleY(1.32)">24.04.2018 09:15:35</span></div>
<div class="t" style="left:545.9px;top:384.7px;font-size:5.1px;color:#202020;"><span class="s" style="transform:scaleY(1.32)">24.04.2018 09:15:35</span></div>

</body></html>
